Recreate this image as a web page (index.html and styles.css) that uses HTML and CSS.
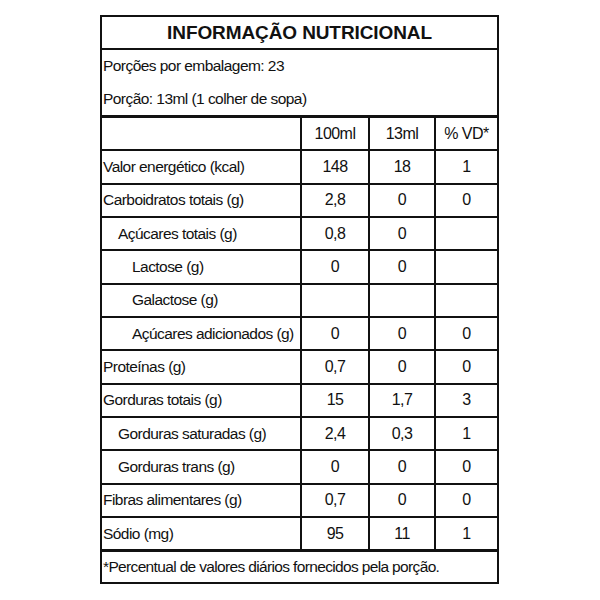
FILE: index.html
```html
<!DOCTYPE html>
<html lang="pt">
<head>
<meta charset="utf-8">
<title>Informação Nutricional</title>
<link rel="stylesheet" href="styles.css">
</head>
<body>
<div class="page">
  <div class="label">
    <div class="title">INFORMAÇÃO NUTRICIONAL</div>
    <div class="serving">
      <div class="line">Porções por embalagem: 23</div>
      <div class="line">Porção: 13ml (1 colher de sopa)</div>
    </div>
    <div class="grid">
      <div class="cell name"></div><div class="cell val">100ml</div><div class="cell val">13ml</div><div class="cell val">% VD*</div>
      <div class="cell name">Valor energético (kcal)</div><div class="cell val">148</div><div class="cell val">18</div><div class="cell val">1</div>
      <div class="cell name">Carboidratos totais (g)</div><div class="cell val">2,8</div><div class="cell val">0</div><div class="cell val">0</div>
      <div class="cell name ind1">Açúcares totais (g)</div><div class="cell val">0,8</div><div class="cell val">0</div><div class="cell val"></div>
      <div class="cell name ind2">Lactose (g)</div><div class="cell val">0</div><div class="cell val">0</div><div class="cell val"></div>
      <div class="cell name ind2">Galactose (g)</div><div class="cell val"></div><div class="cell val"></div><div class="cell val"></div>
      <div class="cell name ind2">Açúcares adicionados (g)</div><div class="cell val">0</div><div class="cell val">0</div><div class="cell val">0</div>
      <div class="cell name">Proteínas (g)</div><div class="cell val">0,7</div><div class="cell val">0</div><div class="cell val">0</div>
      <div class="cell name">Gorduras totais (g)</div><div class="cell val">15</div><div class="cell val">1,7</div><div class="cell val">3</div>
      <div class="cell name ind1">Gorduras saturadas (g)</div><div class="cell val">2,4</div><div class="cell val">0,3</div><div class="cell val">1</div>
      <div class="cell name ind1">Gorduras trans (g)</div><div class="cell val">0</div><div class="cell val">0</div><div class="cell val">0</div>
      <div class="cell name">Fibras alimentares (g)</div><div class="cell val">0,7</div><div class="cell val">0</div><div class="cell val">0</div>
      <div class="cell name">Sódio (mg)</div><div class="cell val">95</div><div class="cell val">11</div><div class="cell val">1</div>
    </div>
    <div class="foot">*Percentual de valores diários fornecidos pela porção.</div>
  </div>
</div>
</body>
</html>
```

FILE: styles.css
```css
html, body {
  margin: 0;
  padding: 0;
  background: #fff;
}
.page {
  padding: 15px 0 0 100px;
}
.label {
  width: 395px;
  border: 2px solid #111;
  font-family: "Liberation Sans", Arial, sans-serif;
  font-size: 15.5px;
  letter-spacing: -0.55px;
  white-space: nowrap;
  color: #111;
}
.title {
  height: 31px;
  border-bottom: 2px solid #111;
  display: flex;
  align-items: center;
  justify-content: center;
  font-weight: bold;
  font-size: 19px;
  letter-spacing: -0.1px;
}
.serving {
  height: 65px;
  border-bottom: 3px solid #111;
  display: flex;
  flex-direction: column;
}
.line {
  flex: 1;
  display: flex;
  align-items: center;
  padding-left: 1px;
}
.grid {
  display: grid;
  grid-template-columns: 198px 66px 64px 61px;
  grid-auto-rows: 31.33px;
  gap: 2px;
  background: #111;
  border-bottom: 3px solid #111;
}
.cell {
  background: #fff;
  display: flex;
  align-items: center;
}
.name {
  padding-left: 1px;
}
.ind1 {
  padding-left: 16px;
}
.ind2 {
  padding-left: 30px;
}
.val {
  justify-content: center;
  font-size: 16px;
}
.foot {
  height: 30px;
  display: flex;
  align-items: center;
  padding-left: 1px;
  letter-spacing: -0.65px;
}
```
